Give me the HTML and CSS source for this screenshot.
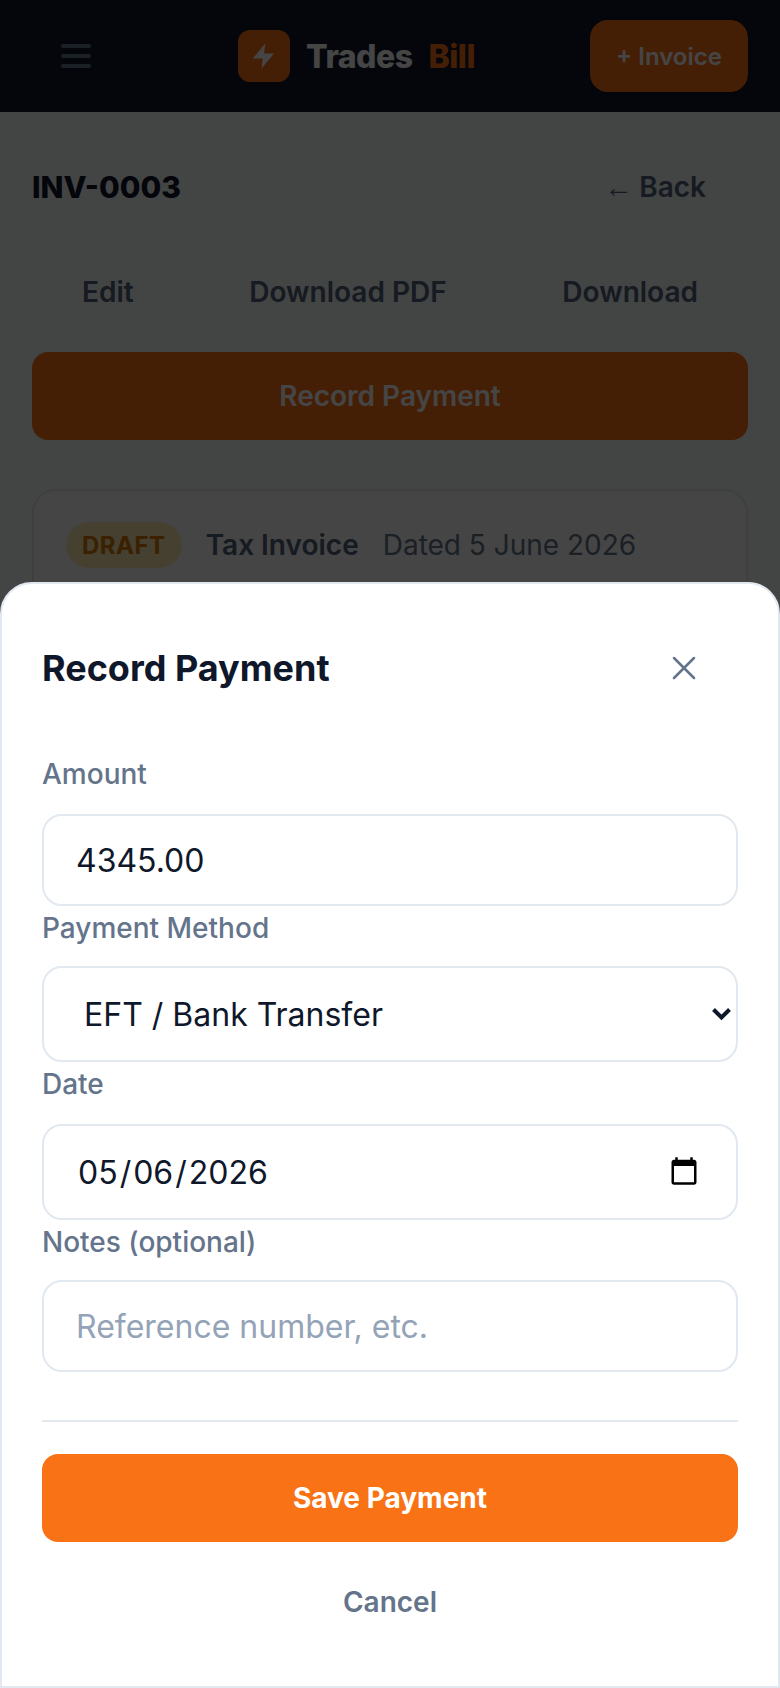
FILE: index.html
```html
<!DOCTYPE html>
<html lang="en">
<head>
<meta charset="utf-8">
<title>Record Payment</title>
<link rel="stylesheet" href="styles.css">
</head>
<body>
<div class="page">
  <header class="topbar">
    <button class="burger" type="button" aria-label="Menu"><span></span><span></span><span></span></button>
    <div class="brand">
      <span class="logo"><svg width="30" height="30" viewBox="0 0 24 24"><path d="M13 2 3 14h8l-1 8 10-12h-8z" fill="#fff"/></svg></span>
      <span class="brand-name">Trades</span><span class="brand-accent">Bill</span>
    </div>
    <button class="new-btn" type="button">+ Invoice</button>
  </header>
  <main class="content">
    <div class="title-row">
      <h1 class="inv-no">INV-0003</h1>
      <a class="back"><span class="arrow">←</span> Back</a>
    </div>
    <div class="actions">
      <a class="action">Edit</a>
      <a class="action">Download PDF</a>
      <a class="action">Download</a>
    </div>
    <button class="record-btn" type="button">Record Payment</button>
    <section class="card">
      <span class="badge">DRAFT</span>
      <span class="doc-type">Tax Invoice</span>
      <span class="doc-date">Dated 5 June 2026</span>
    </section>
  </main>
</div>
<div class="overlay"></div>
<div class="sheet">
  <div class="sheet-head">
    <h2 class="sheet-title">Record Payment</h2>
    <button class="close" type="button" aria-label="Close"><svg width="24" height="24" viewBox="0 0 24 24" fill="none" stroke="#64748b" stroke-width="2.5" stroke-linecap="round"><path d="M2 2l20 20M22 2 2 22"/></svg></button>
  </div>
  <label class="field-label amount-label">Amount</label>
  <input class="field" type="text" value="4345.00">
  <label class="field-label">Payment Method</label>
  <div class="select-wrap">
    <select class="field tall select"><option>EFT / Bank Transfer</option></select>
    <svg class="chevron" width="19" height="13" viewBox="0 0 19 13" fill="none" stroke="#0f172a" stroke-width="4"><path d="M1.500 1.500 9.500 9.500l8-8"/></svg>
  </div>
  <label class="field-label date-label">Date</label>
  <input class="field tall" type="date" value="2026-05-06">
  <label class="field-label">Notes (optional)</label>
  <input class="field" type="text" placeholder="Reference number, etc.">
  <hr class="rule">
  <button class="save" type="button">Save Payment</button>
  <button class="cancel" type="button">Cancel</button>
</div>
</body>
</html>
```
FILE: styles.css
```css
* { box-sizing: border-box; }
html, body { margin: 0; height: 100%; }
body { font-family: Inter, "Liberation Sans", sans-serif; background: #f8fafc; color: #0f172a; overflow: hidden; }
button { font-family: inherit; border: 0; background: none; }

.topbar { height: 112px; background: #0f172a; display: flex; align-items: center; justify-content: space-between; padding: 0 32px 0 61px; }
.burger { width: 30px; padding: 0; display: flex; flex-direction: column; gap: 6px; }
.burger span { display: block; height: 4px; border-radius: 2px; background: #64748b; }
.brand { display: flex; align-items: center; margin-left: 32px; }
.logo { width: 52px; height: 52px; background: #f97316; border-radius: 12px; display: flex; align-items: center; justify-content: center; margin-right: 16px; }
.brand-name { font-size: 32px; font-weight: 800; color: #fff; margin-right: 16px; letter-spacing: -0.5px; }
.brand-accent { font-size: 32px; font-weight: 800; color: #f97316; letter-spacing: -0.5px; }
.new-btn { width: 158px; height: 72px; background: #f97316; color: #fff; border-radius: 18px; font-size: 24px; font-weight: 600; }

.content { padding: 32px; }
.title-row { display: flex; align-items: center; justify-content: space-between; height: 86px; padding-right: 42px; }
.inv-no { margin: 0; font-size: 30px; font-weight: 800; }
.back { font-size: 28px; font-weight: 600; color: #526079; }
.arrow { font-family: "Liberation Sans", sans-serif; font-weight: 400; }
.actions { display: flex; justify-content: space-between; align-items: center; height: 76px; margin-top: 24px; padding: 0 50px; }
.action { font-size: 28px; font-weight: 600; color: #526079; }
.record-btn { display: block; width: 100%; height: 88px; margin-top: 22px; background: #f97316; color: #fff; border-radius: 16px; font-size: 28px; font-weight: 600; }
.card { margin-top: 49px; height: 300px; background: #fff; border: 2px solid #e2e8f0; border-radius: 24px; padding: 31px 32px; display: flex; align-items: flex-start; gap: 24px; }
.badge { height: 46px; display: flex; align-items: center; background: #fdecb0; color: #d97706; border-radius: 24px; padding: 0 16px; font-size: 24px; font-weight: 700; letter-spacing: 0.5px; }
.doc-type { font-size: 28px; font-weight: 600; color: #526079; line-height: 46px; }
.doc-date { font-size: 28px; color: #64748b; line-height: 46px; }

.overlay { position: fixed; inset: 0; background: rgba(0, 0, 0, 0.73); backdrop-filter: blur(0.6px); }
.sheet { position: fixed; left: 0; right: 0; bottom: 0; height: 1106px; background: #fff; border: 2px solid #e2e8f0; border-radius: 32px 32px 0 0; padding: 40px 40px 0; display: flex; flex-direction: column; }
.sheet-head { display: flex; align-items: center; justify-content: space-between; height: 88px; flex: none; }
.sheet-title { margin: 0; font-size: 36px; font-weight: 700; color: #0f172a; }
.close { width: 48px; height: 48px; padding: 0; margin-right: 30px; display: flex; align-items: center; justify-content: center; }

.field-label { font-size: 28px; font-weight: 500; color: #64748b; line-height: 32px; margin: 6px 0 22px; }
.amount-label { margin: 46px 0 24px; }
.date-label { margin: 6px 0 24px; }
.field { zoom: 2; display: block; flex: none; width: 100%; height: 46px; border: 1px solid #e2e8f0; border-radius: 10px; background: #fff; padding: 0 16px; font-family: inherit; font-size: 16px; color: #0f172a; outline: 0; }
.field.tall { height: 48px; }
.field::placeholder { color: #94a3b8; }
.select-wrap { position: relative; flex: none; }
.select { appearance: none; padding-left: 20px; }
.chevron { position: absolute; right: 7px; top: 42px; }
.rule { flex: none; width: 100%; margin: 48px 0 32px; border: 0; border-top: 2px solid #e2e8f0; }
.save { flex: none; height: 88px; background: #f97316; color: #fff; border-radius: 16px; font-size: 28px; font-weight: 700; }
.cancel { flex: none; height: 88px; margin-top: 16px; color: #64748b; font-size: 28px; font-weight: 600; }
```
